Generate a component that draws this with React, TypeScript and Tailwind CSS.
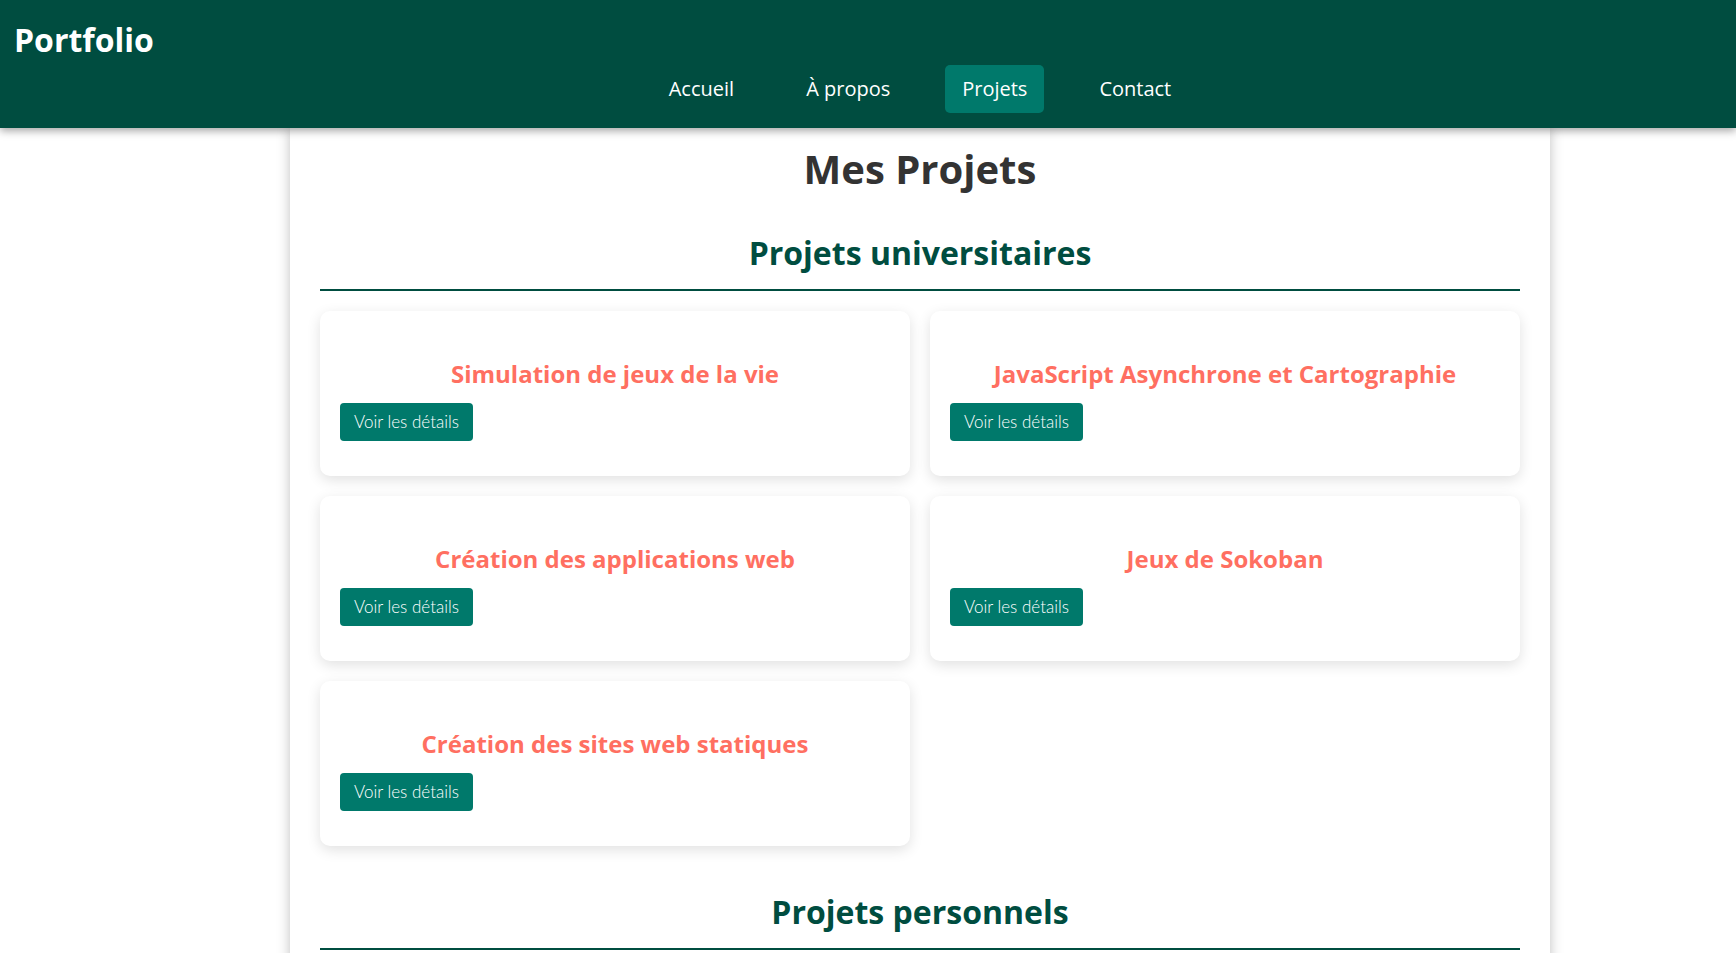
import React from 'react';

const links = ['Accueil', 'À propos', 'Projets', 'Contact'];

const universitaires = [
  'Simulation de jeux de la vie',
  'JavaScript Asynchrone et Cartographie',
  'Création des applications web',
  'Jeux de Sokoban',
  'Création des sites web statiques',
];

const personnels = ['Portfolio personnel', 'Application de gestion de tâches'];

const ProjectCard: React.FC<{ title: string }> = ({ title }) => (
  <div className="bg-white rounded-[10px] shadow-[0_4px_14px_rgba(0,0,0,0.12)] px-5 pt-[45px] pb-[35px]">
    <h3 className="text-center text-[24px] leading-[36px] font-bold text-[#ff6f61] mb-[11px]">{title}</h3>
    <button className="bg-[#00796b] text-white rounded-[4px] h-[38px] px-[14px] text-[17px] font-light font-['Lato',sans-serif]">
      Voir les détails
    </button>
  </div>
);

const Section: React.FC<{ title: string; items: string[] }> = ({ title, items }) => (
  <section className="mb-[42px]">
    <h2 className="text-center text-[32px] leading-[48px] font-bold text-[#004d40] pb-[12px] border-b-2 border-[#004d40]">
      {title}
    </h2>
    <div className="grid grid-cols-2 gap-5 mt-5">
      {items.map((t) => (
        <ProjectCard key={t} title={t} />
      ))}
    </div>
  </section>
);

export default function App() {
  return (
    <div className="min-h-screen bg-white font-['Open_Sans','Noto_Sans',sans-serif]">
      <header className="relative z-10 bg-[#004d40] shadow-[0_3px_8px_rgba(0,0,0,0.35)] pt-[17px] pb-[15px]">
        <h1 className="pl-[14px] -mt-px mb-px text-white text-[32px] leading-[48px] font-bold">Portfolio</h1>
        <nav className="ml-[290px] w-[1260px] flex justify-center gap-[38px]">
          {links.map((l) => (
            <a
              key={l}
              href="#"
              className={
                'px-[17px] h-[48px] flex items-center rounded-[5px] text-white text-[20px] ' +
                (l === 'Projets' ? 'bg-[#00796b]' : '')
              }
            >
              {l}
            </a>
          ))}
        </nav>
      </header>
      <main className="ml-[290px] w-[1260px] bg-white shadow-[0_0_12px_rgba(0,0,0,0.25)] px-[30px] pt-[11px] pb-10">
        <h1 className="text-center text-[40px] leading-[60px] font-bold text-[#333] mb-[30px]">Mes Projets</h1>
        <Section title="Projets universitaires" items={universitaires} />
        <Section title="Projets personnels" items={personnels} />
      </main>
    </div>
  );
}
